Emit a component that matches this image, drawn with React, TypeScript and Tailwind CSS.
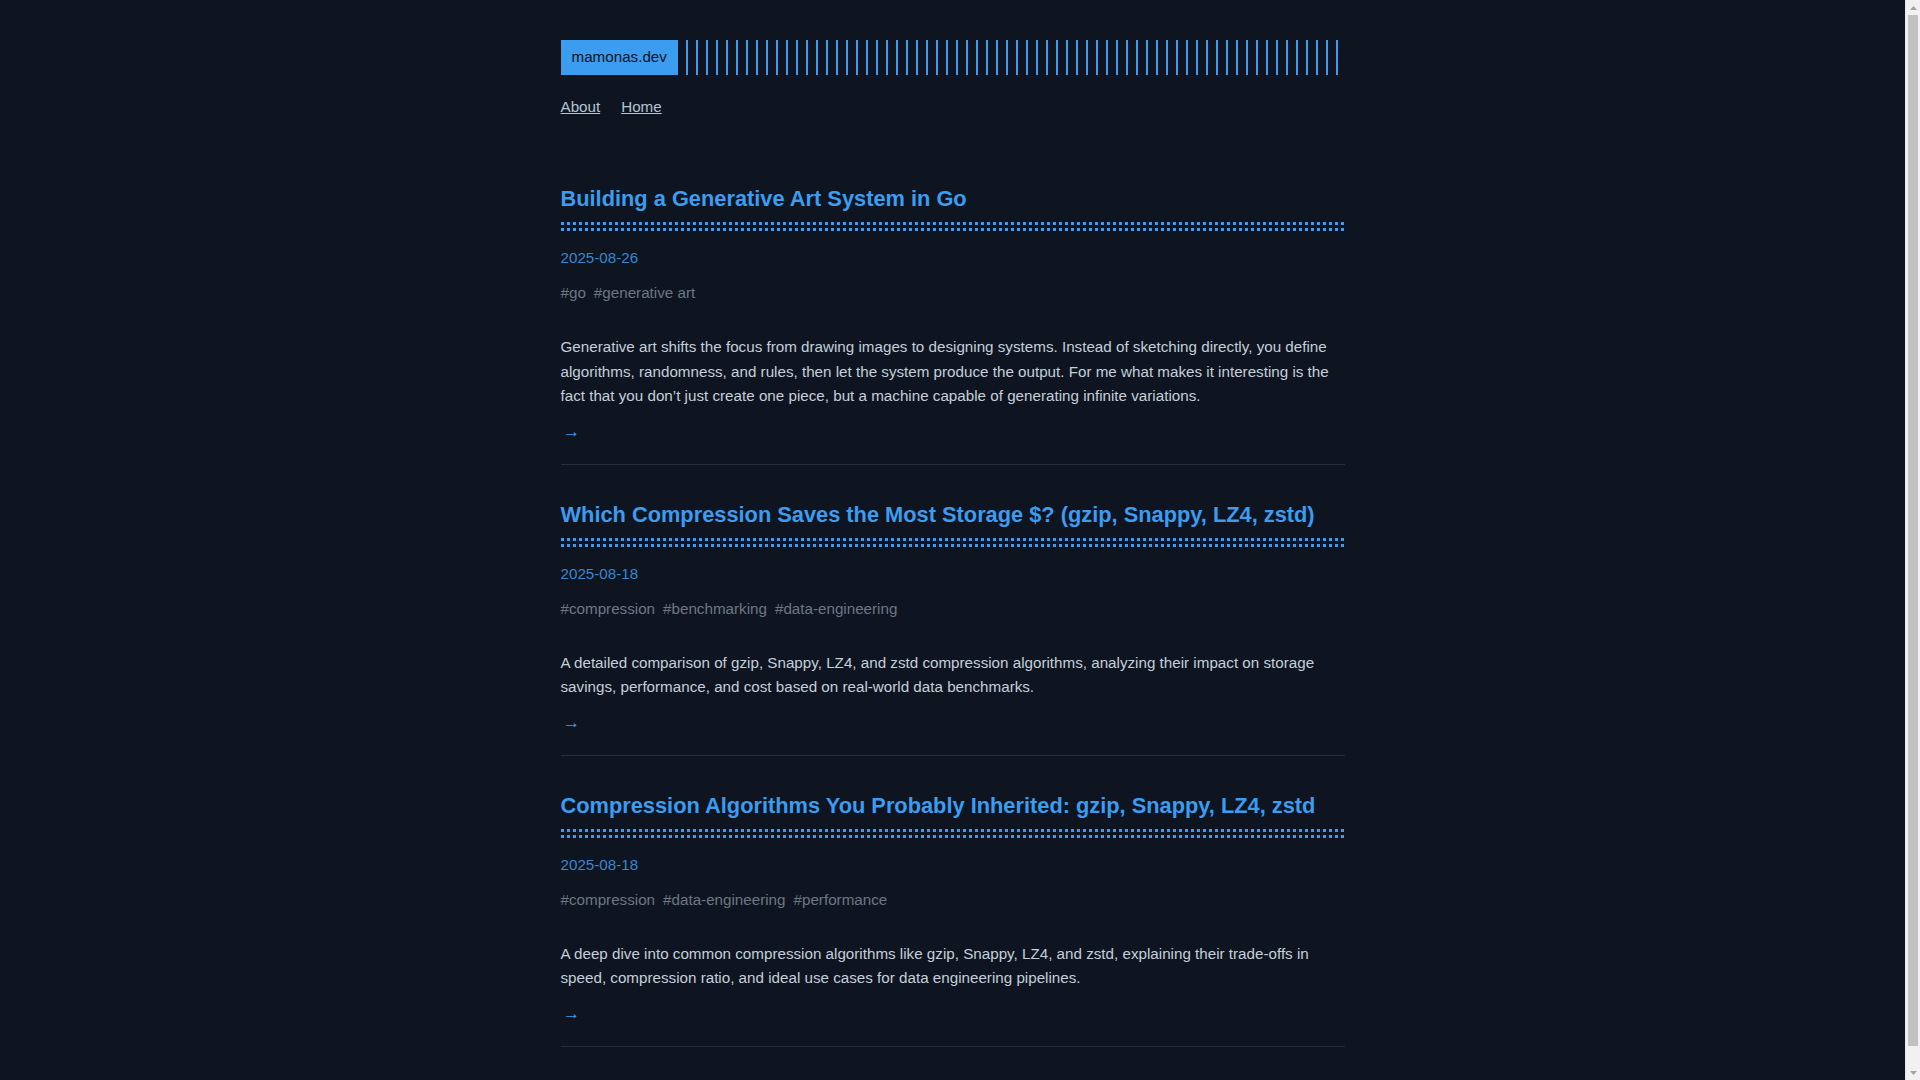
const POSTS = [
  {
    title: 'Building a Generative Art System in Go',
    date: '2025-08-26',
    tags: ['go', 'generative art'],
    summary:
      'Generative art shifts the focus from drawing images to designing systems. Instead of sketching directly, you define algorithms, randomness, and rules, then let the system produce the output. For me what makes it interesting is the fact that you don’t just create one piece, but a machine capable of generating infinite variations.',
  },
  {
    title: 'Which Compression Saves the Most Storage $? (gzip, Snappy, LZ4, zstd)',
    date: '2025-08-18',
    tags: ['compression', 'benchmarking', 'data-engineering'],
    summary:
      'A detailed comparison of gzip, Snappy, LZ4, and zstd compression algorithms, analyzing their impact on storage savings, performance, and cost based on real-world data benchmarks.',
  },
  {
    title: 'Compression Algorithms You Probably Inherited: gzip, Snappy, LZ4, zstd',
    date: '2025-08-18',
    tags: ['compression', 'data-engineering', 'performance'],
    summary:
      'A deep dive into common compression algorithms like gzip, Snappy, LZ4, and zstd, explaining their trade-offs in speed, compression ratio, and ideal use cases for data engineering pipelines.',
  },
  {
    title: 'Partitioning Strategies for Large Parquet Datasets',
    date: '2025-08-02',
    tags: ['parquet', 'data-engineering'],
    summary:
      'How partition layout, file sizes and column statistics shape query cost, and a few rules of thumb for keeping data lakes fast as they grow.',
  },
];

// two rows of square 3px dots under each title
const dots =
  'h-[3px] bg-[repeating-linear-gradient(90deg,#3b9cf0_0px,#3b9cf0_3px,transparent_3px,transparent_6px)]';

function PostItem({ post }: { post: (typeof POSTS)[number] }) {
  return (
    <article className="border-b border-[#262e3a] pt-[35px] pb-[21px]">
      <h2 className="text-[21.8px] leading-[30px] font-bold text-[#3b9cf0]">
        {post.title}
      </h2>
      <div className="mt-[8px] flex flex-col gap-[3px]">
        <div className={dots} />
        <div className={dots} />
      </div>
      <div className="mt-[15px] leading-[24px] text-[#3a86cc]">{post.date}</div>
      <div className="mt-[11px] flex gap-[8px] leading-[24px] text-[#6c7784]">
        {post.tags.map((t) => (
          <span key={t}>#{t}</span>
        ))}
      </div>
      <p className="mt-[30px] leading-[24.5px] text-[#c3cfda]">{post.summary}</p>
      <a href="#" className="mt-[10px] block pl-[2px] text-[17.5px] leading-[24px] text-[#3b9cf0]">
        →
      </a>
    </article>
  );
}

// classic light scrollbar at the right edge
function ScrollBar() {
  return (
    <aside className="flex w-[15px] flex-col border-l border-[#e8e8e8] bg-[#f1f1f1]">
      <div className="flex h-[15px] items-center justify-center">
        <svg width="7" height="4" viewBox="0 0 7 4">
          <path d="M0 4 L3.5 0 L7 4 Z" fill="#a3a3a3" />
        </svg>
      </div>
      <div className="mx-[2px] h-[1031px] bg-[#c1c1c1]" />
      <div className="mt-auto flex h-[15px] items-center justify-center">
        <svg width="7" height="4" viewBox="0 0 7 4">
          <path d="M0 0 L7 0 L3.5 4 Z" fill="#a3a3a3" />
        </svg>
      </div>
    </aside>
  );
}

export default function App() {
  return (
    <div className="flex h-screen bg-[#0f1520] font-['Liberation_Sans',Arial,sans-serif] text-[15.2px]">
      <div className="flex-1 overflow-y-auto [scrollbar-width:none]">
        <div className="mx-auto w-[784px] pt-[40px] pb-20">
          {/* Header */}
          <header className="flex h-[35px] items-stretch gap-[8px]">
            <a
              href="#"
              className="flex items-center bg-[#3b9cf0] px-[11px] text-[#0f1520]"
            >
              mamonas.dev
            </a>
            <div className="flex-1 bg-[repeating-linear-gradient(90deg,#3b9cf0_0px,#3b9cf0_2px,transparent_2px,transparent_10px)]" />
          </header>

          <nav className="mt-[20px] flex gap-[21px] leading-[24px] text-[#b4c4d2]">
            <a href="#" className="underline">About</a>
            <a href="#" className="underline">Home</a>
          </nav>

          <main className="mt-[30px]">
            {POSTS.map((p) => (
              <PostItem key={p.title} post={p} />
            ))}
          </main>
        </div>
      </div>
      <ScrollBar />
    </div>
  );
}
